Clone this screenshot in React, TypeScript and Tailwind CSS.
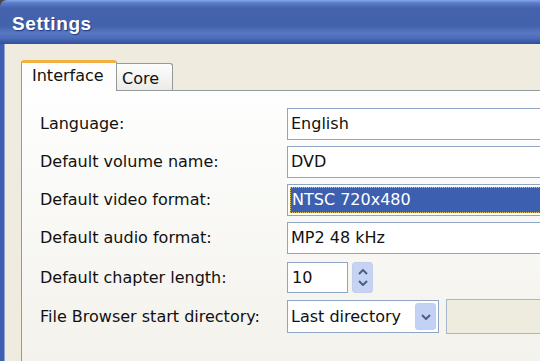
import React from "react";

const font = { fontFamily: '"DejaVu Sans", Tahoma, sans-serif' };

const Chevron = ({ up = false }: { up?: boolean }) => (
  <svg width="10" height="6" viewBox="0 0 10 6" className="block">
    <polyline
      points={up ? "1,5 5,1 9,5" : "1,1 5,5 9,1"}
      fill="none"
      stroke="#4a5f8a"
      strokeWidth="2"
    />
  </svg>
);

const Label = ({ text }: { text: string }) => (
  <div className="w-[247px] shrink-0 text-[16px] text-[#111]">{text}</div>
);

const TextBox = ({ value }: { value: string }) => (
  <div className="flex-1 h-[32px] border border-[#8ea5c6] bg-white flex items-center pl-[3px] text-[16px] text-[#111]">
    {value}
  </div>
);

export default function App() {
  const rows: [string, string][] = [
    ["Language:", "English"],
    ["Default volume name:", "DVD"],
  ];

  return (
    <div className="w-[540px] h-[361px] overflow-hidden bg-[#4a4a4a]" style={font}>
      <div className="w-[640px] h-full flex flex-col rounded-tl-[7px] overflow-hidden">
        {/* title bar */}
        <div className="h-[44px] shrink-0 bg-[linear-gradient(to_bottom,#86a6e6_0px,#5a7ccb_3px,#4563ad_8px,#4362ac_26px,#5878c3_33px,#4d6db8_38px,#2f4f9e_44px)] flex items-center pl-[12px] pt-[5px]">
          <span className="text-white font-bold text-[19px] tracking-[0.6px] [text-shadow:1px_1px_1px_#1f3a85] font-['Liberation_Sans',Arial,sans-serif]">
            Settings
          </span>
        </div>

        <div className="flex-1 flex">
          <div className="w-[5px] bg-[#3f5fb0] border-r border-[#8ea4d8]" />
          <div className="flex-1 bg-[#efebdf] pl-[16px] pt-[16px] flex flex-col">
            {/* tabs */}
            <div className="flex items-end h-[30px]">
              <div className="relative z-10 w-[96px] h-[31px] -mb-px bg-[#fdfdfd] border-x border-[#919b9c] border-t-[3px] border-t-[#f2b13f] rounded-t-[3px] pl-[10px] pt-[1px] text-[16px] text-[#111]">
                Interface
              </div>
              <div className="w-[56px] h-[27px] bg-linear-to-b from-[#fdfdfd] to-[#ecebe6] border-r border-t border-[#919b9c] rounded-tr-[3px] pl-[5px] pt-[3px] text-[16px] text-[#111]">
                Core
              </div>
            </div>

            {/* panel */}
            <div className="flex-1 border-t border-l border-[#919b9c] bg-linear-to-b from-[#fefefe] to-[#f3f2ec] pt-[17px] pl-[18px] flex flex-col gap-[6px]">
              {rows.map(([l, v]) => (
                <div key={l} className="flex items-center">
                  <Label text={l} />
                  <TextBox value={v} />
                </div>
              ))}

              <div className="flex items-center">
                <Label text="Default video format:" />
                <div className="flex-1 h-[32px] border border-[#8ea5c6] bg-white p-[2px]">
                  <div className="h-full bg-[#3d5fb0] border border-dotted border-[#e0c060] flex items-center pl-[1px] text-[16px] text-white">
                    NTSC 720x480
                  </div>
                </div>
              </div>

              <div className="flex items-center">
                <Label text="Default audio format:" />
                <TextBox value="MP2 48 kHz" />
              </div>

              <div className="flex items-center mt-[2px]">
                <Label text="Default chapter length:" />
                <div className="w-[61px] h-[31px] border border-[#8ea5c6] bg-white flex items-center pl-[4px] text-[16px] text-[#111]">
                  10
                </div>
                <div className="ml-[4px] w-[21px] h-[31px] rounded-[3px] border border-[#c2cfea] bg-[#c6d3f4] flex flex-col items-center justify-around py-[3px]">
                  <Chevron up />
                  <Chevron />
                </div>
              </div>

              <div className="flex items-center">
                <Label text="File Browser start directory:" />
                <div className="w-[152px] h-[33px] border border-[#8ea5c6] bg-white flex items-center justify-between pl-[3px] pr-[2px] text-[16px] text-[#111]">
                  <span>Last directory</span>
                  <div className="w-[21px] h-[27px] rounded-[3px] border border-[#c2cfea] bg-[#c3d1f4] flex items-center justify-center">
                    <Chevron />
                  </div>
                </div>
                <div className="ml-[7px] flex-1 h-[35px] border border-[#a7b6cc] bg-[#eeebdf]" />
              </div>
            </div>
          </div>
        </div>
      </div>
    </div>
  );
}
